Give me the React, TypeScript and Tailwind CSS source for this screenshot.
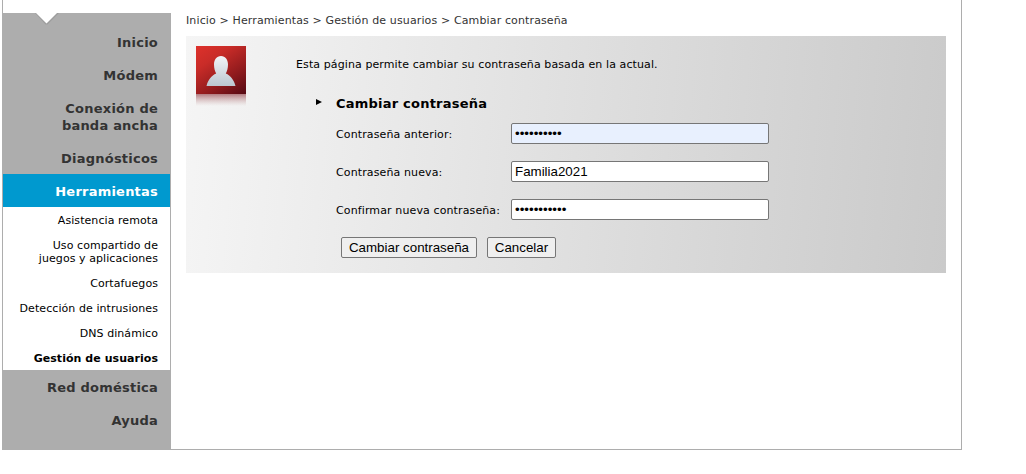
import React from "react";

const mainItem =
  "block pt-[9px] pb-[7px] pr-3 text-right text-[13px] leading-[17px] tracking-[0.22px] font-bold whitespace-pre-line";
const subItem =
  "block pt-[7px] pb-[5px] pr-3 text-right text-[11px] leading-[13px] text-black whitespace-pre-line";

function Main({ label, className = "text-[#333]" }: { label: string; className?: string }) {
  return <a className={`${mainItem} ${className}`}>{label}</a>;
}

function Sub({ label, className = "tracking-[0.07px]" }: { label: string; className?: string }) {
  return <a className={`${subItem} ${className}`}>{label}</a>;
}

function Sidebar() {
  return (
    <nav className="relative mt-[13px] h-[436px] w-[169px] shrink-0 bg-[#adadad] pt-3 pl-px pr-px">
      <svg className="absolute left-[33px] top-0" width="24" height="12" viewBox="0 0 24 12">
        <path d="M0 0H24L12.500 11.500H10.500Z" fill="#9d9d9d" />
        <path d="M1 0H22L11.500 10.500Z" fill="#fff" />
      </svg>
      <Main label="Inicio" />
      <Main label="Módem" />
      <Main label={"Conexión de\nbanda ancha"} />
      <Main label="Diagnósticos" />
      <Main label="Herramientas" className="bg-[#0099cf] text-white" />
      <div className="bg-white">
        <Sub label="Asistencia remota" />
        <Sub label={"Uso compartido de\njuegos y aplicaciones"} />
        <Sub label="Cortafuegos" />
        <Sub label="Detección de intrusiones" />
        <Sub label="DNS dinámico" />
        <Sub label="Gestión de usuarios" className="tracking-[0.05px] font-bold" />
      </div>
      <Main label="Red doméstica" />
      <Main label="Ayuda" />
    </nav>
  );
}

function UserIcon() {
  return (
    <svg width="50" height="60" viewBox="0 0 50 60" className="shrink-0">
      <defs>
        <linearGradient id="red" x1="0" y1="0" x2="0.8" y2="1.1">
          <stop offset="0" stopColor="#de312b" />
          <stop offset="0.3" stopColor="#c92c28" />
          <stop offset="0.65" stopColor="#951c1e" />
          <stop offset="1" stopColor="#5a0b14" />
        </linearGradient>
        <linearGradient id="person" x1="0" y1="0" x2="0" y2="1">
          <stop offset="0" stopColor="#f2f4f7" />
          <stop offset="1" stopColor="#bcc6d0" />
        </linearGradient>
        <linearGradient id="mirror" x1="0" y1="0" x2="0" y2="1">
          <stop offset="0" stopColor="#8a3038" stopOpacity="0.62" />
          <stop offset="1" stopColor="#c09090" stopOpacity="0" />
        </linearGradient>
      </defs>
      <rect width="50" height="48" fill="url(#red)" />
      <path
        d="M25 10C29.500 10 32 14 32 18.500C32 22.500 31 25.500 29.800 27.500C34.500 29.500 38 34 39.500 40H10.500C12 34 15.500 29.500 20.200 27.500C19 25.500 18 22.500 18 18.500C18 14 20.500 10 25 10Z"
        fill="url(#person)"
      />
      <rect y="48" width="50" height="12" fill="url(#mirror)" />
    </svg>
  );
}

function Field({
  label,
  value,
  secret,
  inputClass,
}: {
  label: string;
  value: string;
  secret?: boolean;
  inputClass: string;
}) {
  return (
    <label className="flex h-[21px] items-center">
      <span className="w-[175px] pt-[2px] text-[11px] leading-[13px] tracking-[0.12px] whitespace-nowrap">{label}</span>
      <input
        type={secret ? "password" : "text"}
        defaultValue={value}
        className={`h-[21px] w-[258px] rounded-[2px] border border-[#767676] px-[3px] font-['Liberation_Sans',Arial,sans-serif] text-[13.333px] text-black outline-none ${inputClass}`}
      />
    </label>
  );
}

const button =
  "h-[21px] rounded-[2px] border border-[#767676] bg-[#efefef] font-['Liberation_Sans',Arial,sans-serif] text-[13.333px] leading-[19px] text-black whitespace-nowrap";

export default function App() {
  return (
    <div className="h-[474px] w-[1026px] overflow-hidden bg-white pl-[2px] font-['DejaVu_Sans',Verdana,sans-serif] text-black">
      <div className="flex h-[450px] w-[960px] border-x border-b border-[#adadad]">
        <div className="-ml-px flex">
          <Sidebar />
        </div>
        <main className="pl-[15px] pt-[14px]">
          <div className="h-[22px] text-[11px] leading-[14px] tracking-[0.13px] text-[#333] whitespace-nowrap">
            Inicio &gt; Herramientas &gt; Gestión de usuarios &gt; Cambiar contraseña
          </div>
          <section className="flex h-[237px] w-[760px] bg-[linear-gradient(95deg,#f5f5f5,#cacaca)] pl-[10px] pt-[10px]">
            <UserIcon />
            <div className="pl-[50px] pt-[12px]">
              <p className="text-[11px] leading-[14px] tracking-[0.1px] whitespace-nowrap">
                Esta página permite cambiar su contraseña basada en la actual.
              </p>
              <div className="mt-[23px] flex h-[17px] pl-[20px]">
                <svg width="6" height="6" viewBox="0 0 6 6" className="mt-[4px] mr-[14px]">
                  <path d="M0 0L6 3L0 6Z" />
                </svg>
                <h2 className="text-[13px] leading-[17px] tracking-[0.22px] font-bold whitespace-nowrap">Cambiar contraseña</h2>
              </div>
              <form className="mt-[11px] flex flex-col gap-[17px] pl-[40px]">
                <Field label="Contraseña anterior:" value="abcdefghij" secret inputClass="bg-[#e8f0fe]" />
                <Field label="Contraseña nueva:" value="Familia2021" inputClass="bg-white" />
                <Field label="Confirmar nueva contraseña:" value="Familia2021" secret inputClass="bg-white" />
                <div className="flex gap-[10px] pl-[5px]">
                  <button type="button" className={`w-[136px] ${button}`}>Cambiar contraseña</button>
                  <button type="button" className={`w-[69px] ${button}`}>Cancelar</button>
                </div>
              </form>
            </div>
          </section>
        </main>
      </div>
    </div>
  );
}
